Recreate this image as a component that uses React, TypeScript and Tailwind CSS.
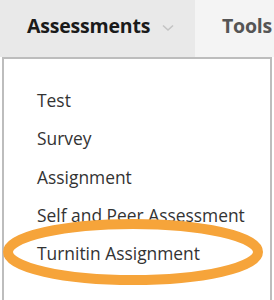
import React from 'react';

const items = ['Test', 'Survey', 'Assignment', 'Self and Peer Assessment', 'Turnitin Assignment'];

const App = () => {
  return (
    <div className="relative w-[274px] h-[300px] overflow-hidden bg-white" style={{ fontFamily: '"Open Sans", sans-serif' }}>
      <div className="flex h-[57px]">
        <div className="w-[195px] bg-[#e9e9e9] flex items-center pl-[27px] pb-[5px]">
          <span className="text-[19.5px] font-bold text-[#1a1a1a] tracking-[-0.2px]">Assessments</span>
          <svg width="12" height="8" viewBox="0 0 12 8" className="ml-[12px] mt-[3px]">
            <path d="M1 1.5 L6 6 L11 1.5" fill="none" stroke="#c4c4c4" strokeWidth="1.6" />
          </svg>
        </div>
        <div className="flex-1 bg-[#f4f4f4] flex items-center pl-[27px] pb-[5px]">
          <span className="text-[19.5px] font-bold text-[#555555] tracking-[-0.2px]">Tools</span>
        </div>
      </div>
      <div className="ml-[2px] w-[270px] h-[250px] border-2 border-b-0 border-[#bdbdbd] pt-[22px] pl-[33px]">
        {items.map((item) => (
          <div key={item} className="text-[17.4px] leading-[38.3px] text-[#333333] whitespace-nowrap">
            {item}
          </div>
        ))}
      </div>
      <svg className="absolute left-0 top-0 pointer-events-none" width="274" height="300">
        <ellipse cx="133" cy="252" rx="125" ry="28" fill="none" stroke="#f6a43a" strokeWidth="10" />
      </svg>
    </div>
  );
};

export default App;
